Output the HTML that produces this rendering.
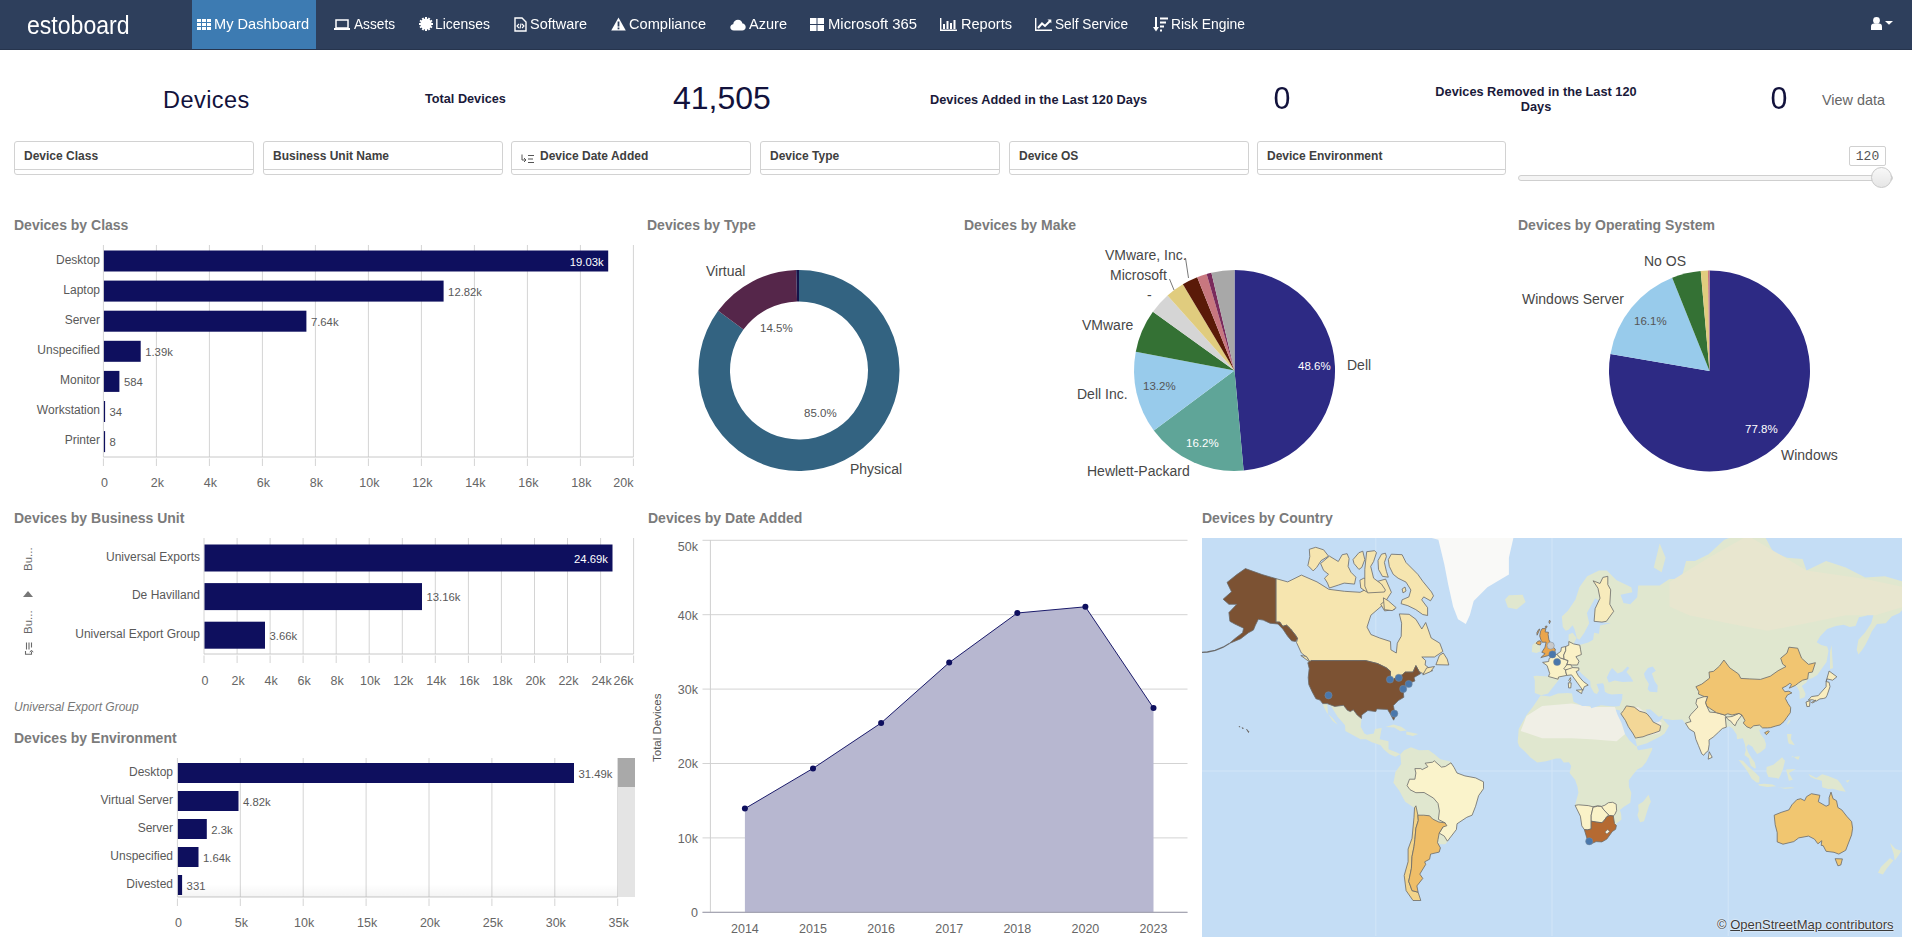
<!DOCTYPE html>
<html><head><meta charset="utf-8">
<style>
*{margin:0;padding:0;box-sizing:border-box}
html,body{width:1912px;height:948px;overflow:hidden;background:#fff;font-family:"Liberation Sans",sans-serif;position:relative}
.a{position:absolute;white-space:nowrap}
#nav{position:absolute;left:0;top:0;width:1912px;height:50px;background:#2e3f5c;border-bottom:1px solid #26344d}
#act{position:absolute;left:192px;top:0;width:124px;height:49px;background:#3d7bb2}
#brand{left:27px;top:11px;font-size:25.5px;line-height:28px;color:#fff;transform:scaleX(0.905);transform-origin:0 0}
.nt{top:15px;font-size:15px;line-height:18px;color:#fff;transform-origin:0 0}
.kp{color:#12123c}
.kl{font-size:13px;font-weight:bold;color:#1a1a3a;line-height:15px}
.fb{position:absolute;top:141px;height:34px;border:1px solid #d2d2d2;border-radius:3px;background:#fff}
.fb .ln{position:absolute;left:0;right:0;top:27px;border-top:1px solid #d2d2d2}
.fb span{position:absolute;top:7px;font-size:12px;line-height:14px;font-weight:bold;color:#404040}
.tt{position:absolute;white-space:nowrap;font-size:14px;font-weight:bold;color:#7b7b7b;line-height:16px}
.lb{position:absolute;white-space:nowrap;font-size:12px;color:#595959;line-height:14px}
.vl{position:absolute;white-space:nowrap;font-size:11.3px;color:#595959;line-height:13px}
.ax{font-size:12.5px;color:#666}
.pl{position:absolute;white-space:nowrap;font-size:14px;color:#474747;line-height:16px}
.pv{position:absolute;white-space:nowrap;font-size:11.5px;color:#555;line-height:14px}
.pw{color:#fff}

</style></head><body>
<div id="nav"><div id="act"></div>
<div class="a" id="brand">estoboard</div>
<div class="a" style="left:197px;top:17px"><svg width="15" height="13" viewBox="0 0 15 13"><g fill="#fff"><rect x="0" y="1" width="4" height="3"/><rect x="5" y="1" width="4" height="3"/><rect x="10" y="1" width="4" height="3"/><rect x="0" y="5" width="4" height="3"/><rect x="5" y="5" width="4" height="3"/><rect x="10" y="5" width="4" height="3"/><rect x="0" y="9" width="4" height="3"/><rect x="5" y="9" width="4" height="3"/><rect x="10" y="9" width="4" height="3"/></g></svg></div>
<div class="a nt" style="left:214px;transform:scaleX(0.974)">My Dashboard</div>
<div class="a" style="left:334px;top:17px"><svg width="16" height="13" viewBox="0 0 16 13"><rect x="2" y="2" width="12" height="8" fill="none" stroke="#fff" stroke-width="1.5"/><rect x="0" y="10" width="16" height="2" fill="#fff"/></svg></div>
<div class="a nt" style="left:354px;transform:scaleX(0.911)">Assets</div>
<div class="a" style="left:419px;top:17px"><svg width="14" height="14" viewBox="0 0 14 14"><g fill="#fff"><circle cx="7" cy="7" r="5.6"/><rect x="6" y="0" width="2" height="3" transform="rotate(0 7 7)"/><rect x="6" y="0" width="2" height="3" transform="rotate(30 7 7)"/><rect x="6" y="0" width="2" height="3" transform="rotate(60 7 7)"/><rect x="6" y="0" width="2" height="3" transform="rotate(90 7 7)"/><rect x="6" y="0" width="2" height="3" transform="rotate(120 7 7)"/><rect x="6" y="0" width="2" height="3" transform="rotate(150 7 7)"/><rect x="6" y="0" width="2" height="3" transform="rotate(180 7 7)"/><rect x="6" y="0" width="2" height="3" transform="rotate(210 7 7)"/><rect x="6" y="0" width="2" height="3" transform="rotate(240 7 7)"/><rect x="6" y="0" width="2" height="3" transform="rotate(270 7 7)"/><rect x="6" y="0" width="2" height="3" transform="rotate(300 7 7)"/><rect x="6" y="0" width="2" height="3" transform="rotate(330 7 7)"/></g></svg></div>
<div class="a nt" style="left:435px;transform:scaleX(0.929)">Licenses</div>
<div class="a" style="left:514px;top:17px"><svg width="13" height="15" viewBox="0 0 13 15"><path d="M1 1 H8 L12 5 V14 H1 Z" fill="none" stroke="#fff" stroke-width="1.4"/><path d="M5 7 L3 9 L5 11 M8 7 L10 9 L8 11 M7 6.5 L6 11.5" fill="none" stroke="#fff" stroke-width="1.1"/></svg></div>
<div class="a nt" style="left:530px;transform:scaleX(0.963)">Software</div>
<div class="a" style="left:611px;top:17px"><svg width="15" height="14" viewBox="0 0 15 14"><path d="M7.5 0.5 L14.8 13.5 H0.2 Z" fill="#fff"/><rect x="6.6" y="4.5" width="1.8" height="5" fill="#2e3f5c"/><rect x="6.6" y="10.5" width="1.8" height="1.8" fill="#2e3f5c"/></svg></div>
<div class="a nt" style="left:629px;transform:scaleX(0.972)">Compliance</div>
<div class="a" style="left:730px;top:17px"><svg width="16" height="12" viewBox="0 0 16 12"><path d="M4 11.5 C1.5 11.5 0.3 10 0.3 8.3 C0.3 6.6 1.6 5.3 3.2 5.2 C3.5 2.6 5.5 0.8 8 0.8 C10.3 0.8 12 2.3 12.5 4.4 C14.4 4.6 15.7 6 15.7 8 C15.7 10 14.2 11.5 12.2 11.5 Z" fill="#fff"/></svg></div>
<div class="a nt" style="left:749px;transform:scaleX(0.970)">Azure</div>
<div class="a" style="left:810px;top:17px"><svg width="14" height="13" viewBox="0 0 14 13"><g fill="#fff"><rect x="0" y="0" width="6.5" height="6"/><rect x="7.5" y="0" width="6.5" height="6"/><rect x="0" y="7" width="6.5" height="6"/><rect x="7.5" y="7" width="6.5" height="6"/></g></svg></div>
<div class="a nt" style="left:827.5px;transform:scaleX(0.988)">Microsoft 365</div>
<div class="a" style="left:940px;top:17px"><svg width="17" height="13" viewBox="0 0 17 13"><path d="M0.7 0 V12.3 H17" fill="none" stroke="#fff" stroke-width="1.4"/><g fill="#fff"><rect x="3" y="6" width="2" height="5"/><rect x="6.5" y="3" width="2" height="8"/><rect x="10" y="5" width="2" height="6"/><rect x="13.5" y="2" width="2" height="9"/></g></svg></div>
<div class="a nt" style="left:960.5px;transform:scaleX(0.971)">Reports</div>
<div class="a" style="left:1034.5px;top:17px"><svg width="17" height="13" viewBox="0 0 17 13"><path d="M0.7 0 V12.3 H17" fill="none" stroke="#fff" stroke-width="1.4"/><path d="M3 10 L7 5.5 L10 8 L15.5 2.5" fill="none" stroke="#fff" stroke-width="2"/><path d="M12.5 1.5 H16.3 V5.3 Z" fill="#fff"/></svg></div>
<div class="a nt" style="left:1055px;transform:scaleX(0.912)">Self Service</div>
<div class="a" style="left:1152.5px;top:17px"><svg width="15" height="15" viewBox="0 0 15 15"><path d="M3 0 V12" stroke="#fff" stroke-width="2"/><path d="M0 10 L3 14.5 L6 10 Z" fill="#fff"/><g fill="#fff"><rect x="7" y="0.5" width="8" height="2"/><rect x="7" y="4.5" width="6" height="2"/><rect x="7" y="8.5" width="4" height="2"/><rect x="7" y="12.5" width="2" height="2"/></g></svg></div>
<div class="a nt" style="left:1170.5px;transform:scaleX(0.924)">Risk Engine</div>
<div class="a" style="left:1871px;top:16px"><svg width="23" height="16" viewBox="0 0 23 16"><circle cx="5.5" cy="4.4" r="3.4" fill="#fff"/><path d="M0 13.9 V10.6 C0 8.9 1.2 7.6 3 7.6 H8 C9.8 7.6 11 8.9 11 10.6 V13.9 Z" fill="#fff"/><path d="M14 5 H22 L18 8.8 Z" fill="#fff"/></svg></div>
</div>
<div class="a kp" style="left:163px;top:87px;font-size:23.5px;line-height:27px;letter-spacing:0.45px">Devices</div>
<div class="a kl" style="left:425px;top:92px;font-size:12.7px">Total Devices</div>
<div class="a kp" style="left:673px;top:80px;font-size:32px;line-height:36px">41,505</div>
<div class="a kl" style="left:930px;top:92px;font-size:12.75px">Devices Added in the Last 120 Days</div>
<div class="a kp" style="left:1273px;top:80px;font-size:32px;line-height:36px;transform:scaleX(0.95)">0</div>
<div class="a kl" style="left:1386px;top:84px;width:300px;text-align:center;font-size:12.75px;line-height:15px;white-space:normal">Devices Removed in the Last 120<br>Days</div>
<div class="a kp" style="left:1770px;top:80px;font-size:32px;line-height:36px;transform:scaleX(0.95)">0</div>
<div class="a" style="left:1822px;top:92px;font-size:14.4px;color:#666">View data</div>
<div class="fb" style="left:14px;width:240px"><span style="left:9px">Device Class</span><div class="ln"></div></div>
<div class="fb" style="left:263px;width:240px"><span style="left:9px">Business Unit Name</span><div class="ln"></div></div>
<div class="fb" style="left:511px;width:240px"><svg class="fi" width="14" height="10" viewBox="0 0 14 10" style="position:absolute;left:9px;top:12px"><path d="M1 0.5 V6 H4.5 M3 4 L5 6 L3 8" fill="none" stroke="#555" stroke-width="1"/><path d="M7 1.5 H13 M7 5 H12 M7 8.5 H13" stroke="#555" stroke-width="1"/></svg><span style="left:28px">Device Date Added</span><div class="ln"></div></div>
<div class="fb" style="left:760px;width:240px"><span style="left:9px">Device Type</span><div class="ln"></div></div>
<div class="fb" style="left:1009px;width:240px"><span style="left:9px">Device OS</span><div class="ln"></div></div>
<div class="fb" style="left:1257px;width:249px"><span style="left:9px">Device Environment</span><div class="ln"></div></div>
<div class="a" style="left:1849px;top:146px;width:37px;height:20px;border:1px solid #d0d0d0;border-radius:2px;font-family:'Liberation Mono',monospace;font-size:13px;color:#555;text-align:center;line-height:20px">120</div>
<div class="a" style="left:1518px;top:175px;width:375px;height:6px;border:1px solid #cfcfcf;border-radius:3px;background:#f4f4f4"></div>
<div class="a" style="left:1871px;top:167px;width:21px;height:21px;border:1px solid #c8c8c8;border-radius:50%;background:linear-gradient(#f8f8f8,#e6e6e6)"></div>
<div class="tt" style="left:14px;top:217px">Devices by Class</div>
<svg class="a" style="left:0;top:0" width="1912" height="948" viewBox="0 0 1912 948"><line x1="103.4" y1="245" x2="103.4" y2="457" stroke="#d4d4d4" stroke-width="1"/><line x1="103.4" y1="458.5" x2="103.4" y2="466" stroke="#d4d4d4" stroke-width="1"/><line x1="156.4" y1="245" x2="156.4" y2="457" stroke="#d4d4d4" stroke-width="1"/><line x1="156.4" y1="458.5" x2="156.4" y2="466" stroke="#d4d4d4" stroke-width="1"/><line x1="209.4" y1="245" x2="209.4" y2="457" stroke="#d4d4d4" stroke-width="1"/><line x1="209.4" y1="458.5" x2="209.4" y2="466" stroke="#d4d4d4" stroke-width="1"/><line x1="262.4" y1="245" x2="262.4" y2="457" stroke="#d4d4d4" stroke-width="1"/><line x1="262.4" y1="458.5" x2="262.4" y2="466" stroke="#d4d4d4" stroke-width="1"/><line x1="315.4" y1="245" x2="315.4" y2="457" stroke="#d4d4d4" stroke-width="1"/><line x1="315.4" y1="458.5" x2="315.4" y2="466" stroke="#d4d4d4" stroke-width="1"/><line x1="368.4" y1="245" x2="368.4" y2="457" stroke="#d4d4d4" stroke-width="1"/><line x1="368.4" y1="458.5" x2="368.4" y2="466" stroke="#d4d4d4" stroke-width="1"/><line x1="421.4" y1="245" x2="421.4" y2="457" stroke="#d4d4d4" stroke-width="1"/><line x1="421.4" y1="458.5" x2="421.4" y2="466" stroke="#d4d4d4" stroke-width="1"/><line x1="474.4" y1="245" x2="474.4" y2="457" stroke="#d4d4d4" stroke-width="1"/><line x1="474.4" y1="458.5" x2="474.4" y2="466" stroke="#d4d4d4" stroke-width="1"/><line x1="527.4" y1="245" x2="527.4" y2="457" stroke="#d4d4d4" stroke-width="1"/><line x1="527.4" y1="458.5" x2="527.4" y2="466" stroke="#d4d4d4" stroke-width="1"/><line x1="580.4" y1="245" x2="580.4" y2="457" stroke="#d4d4d4" stroke-width="1"/><line x1="580.4" y1="458.5" x2="580.4" y2="466" stroke="#d4d4d4" stroke-width="1"/><line x1="633.4" y1="245" x2="633.4" y2="457" stroke="#d4d4d4" stroke-width="1"/><line x1="633.4" y1="458.5" x2="633.4" y2="466" stroke="#d4d4d4" stroke-width="1"/><line x1="103.4" y1="457" x2="633.4" y2="457" stroke="#c8c8c8" stroke-width="1"/><rect x="103.9" y="250.5" width="504.3" height="21" fill="#0e0f5e"/><rect x="103.9" y="280.6" width="339.7" height="21" fill="#0e0f5e"/><rect x="103.9" y="310.7" width="202.5" height="21" fill="#0e0f5e"/><rect x="103.9" y="340.8" width="36.8" height="21" fill="#0e0f5e"/><rect x="103.9" y="370.9" width="15.5" height="21" fill="#0e0f5e"/><rect x="103.9" y="401.0" width="1.2" height="21" fill="#0e0f5e"/><rect x="103.9" y="431.1" width="1.2" height="21" fill="#0e0f5e"/></svg>
<div class="lb" style="left:-100px;width:200px;text-align:right;top:252.8px">Desktop</div>
<div class="vl" style="left:403.7px;width:200px;text-align:right;top:255.7px;color:#fff">19.03k</div>
<div class="lb" style="left:-100px;width:200px;text-align:right;top:282.9px">Laptop</div>
<div class="vl" style="left:448.1px;top:285.8px">12.82k</div>
<div class="lb" style="left:-100px;width:200px;text-align:right;top:313.0px">Server</div>
<div class="vl" style="left:310.9px;top:315.9px">7.64k</div>
<div class="lb" style="left:-100px;width:200px;text-align:right;top:343.1px">Unspecified</div>
<div class="vl" style="left:145.2px;top:346.0px">1.39k</div>
<div class="lb" style="left:-100px;width:200px;text-align:right;top:373.2px">Monitor</div>
<div class="vl" style="left:123.9px;top:376.1px">584</div>
<div class="lb" style="left:-100px;width:200px;text-align:right;top:403.3px">Workstation</div>
<div class="vl" style="left:109.4px;top:406.2px">34</div>
<div class="lb" style="left:-100px;width:200px;text-align:right;top:433.4px">Printer</div>
<div class="vl" style="left:109.4px;top:436.3px">8</div>
<div class="vl ax" style="left:54.4px;width:100px;text-align:center;top:476.5px">0</div>
<div class="vl ax" style="left:107.4px;width:100px;text-align:center;top:476.5px">2k</div>
<div class="vl ax" style="left:160.4px;width:100px;text-align:center;top:476.5px">4k</div>
<div class="vl ax" style="left:213.4px;width:100px;text-align:center;top:476.5px">6k</div>
<div class="vl ax" style="left:266.4px;width:100px;text-align:center;top:476.5px">8k</div>
<div class="vl ax" style="left:319.4px;width:100px;text-align:center;top:476.5px">10k</div>
<div class="vl ax" style="left:372.4px;width:100px;text-align:center;top:476.5px">12k</div>
<div class="vl ax" style="left:425.4px;width:100px;text-align:center;top:476.5px">14k</div>
<div class="vl ax" style="left:478.4px;width:100px;text-align:center;top:476.5px">16k</div>
<div class="vl ax" style="left:531.4px;width:100px;text-align:center;top:476.5px">18k</div>
<div class="vl ax" style="left:533.4px;width:100px;text-align:right;top:476.5px">20k</div>
<div class="tt" style="left:14px;top:510px">Devices by Business Unit</div>
<svg class="a" style="left:0;top:0" width="1912" height="948" viewBox="0 0 1912 948"><line x1="204.0" y1="538" x2="204.0" y2="654" stroke="#d4d4d4" stroke-width="1"/><line x1="204.0" y1="655.5" x2="204.0" y2="663" stroke="#d4d4d4" stroke-width="1"/><line x1="237.1" y1="538" x2="237.1" y2="654" stroke="#d4d4d4" stroke-width="1"/><line x1="237.1" y1="655.5" x2="237.1" y2="663" stroke="#d4d4d4" stroke-width="1"/><line x1="270.1" y1="538" x2="270.1" y2="654" stroke="#d4d4d4" stroke-width="1"/><line x1="270.1" y1="655.5" x2="270.1" y2="663" stroke="#d4d4d4" stroke-width="1"/><line x1="303.1" y1="538" x2="303.1" y2="654" stroke="#d4d4d4" stroke-width="1"/><line x1="303.1" y1="655.5" x2="303.1" y2="663" stroke="#d4d4d4" stroke-width="1"/><line x1="336.2" y1="538" x2="336.2" y2="654" stroke="#d4d4d4" stroke-width="1"/><line x1="336.2" y1="655.5" x2="336.2" y2="663" stroke="#d4d4d4" stroke-width="1"/><line x1="369.2" y1="538" x2="369.2" y2="654" stroke="#d4d4d4" stroke-width="1"/><line x1="369.2" y1="655.5" x2="369.2" y2="663" stroke="#d4d4d4" stroke-width="1"/><line x1="402.3" y1="538" x2="402.3" y2="654" stroke="#d4d4d4" stroke-width="1"/><line x1="402.3" y1="655.5" x2="402.3" y2="663" stroke="#d4d4d4" stroke-width="1"/><line x1="435.3" y1="538" x2="435.3" y2="654" stroke="#d4d4d4" stroke-width="1"/><line x1="435.3" y1="655.5" x2="435.3" y2="663" stroke="#d4d4d4" stroke-width="1"/><line x1="468.4" y1="538" x2="468.4" y2="654" stroke="#d4d4d4" stroke-width="1"/><line x1="468.4" y1="655.5" x2="468.4" y2="663" stroke="#d4d4d4" stroke-width="1"/><line x1="501.4" y1="538" x2="501.4" y2="654" stroke="#d4d4d4" stroke-width="1"/><line x1="501.4" y1="655.5" x2="501.4" y2="663" stroke="#d4d4d4" stroke-width="1"/><line x1="534.5" y1="538" x2="534.5" y2="654" stroke="#d4d4d4" stroke-width="1"/><line x1="534.5" y1="655.5" x2="534.5" y2="663" stroke="#d4d4d4" stroke-width="1"/><line x1="567.5" y1="538" x2="567.5" y2="654" stroke="#d4d4d4" stroke-width="1"/><line x1="567.5" y1="655.5" x2="567.5" y2="663" stroke="#d4d4d4" stroke-width="1"/><line x1="600.6" y1="538" x2="600.6" y2="654" stroke="#d4d4d4" stroke-width="1"/><line x1="600.6" y1="655.5" x2="600.6" y2="663" stroke="#d4d4d4" stroke-width="1"/><line x1="633.6" y1="538" x2="633.6" y2="654" stroke="#d4d4d4" stroke-width="1"/><line x1="633.6" y1="655.5" x2="633.6" y2="663" stroke="#d4d4d4" stroke-width="1"/><line x1="204" y1="654" x2="633.6" y2="654" stroke="#c8c8c8" stroke-width="1"/><rect x="204.5" y="544.5" width="408.0" height="27" fill="#0e0f5e"/><rect x="204.5" y="583.1" width="217.5" height="27" fill="#0e0f5e"/><rect x="204.5" y="621.7" width="60.5" height="27" fill="#0e0f5e"/></svg>
<div class="lb" style="left:0px;width:200px;text-align:right;top:549.8px">Universal Exports</div>
<div class="vl" style="left:408.0px;width:200px;text-align:right;top:552.7px;color:#fff">24.69k</div>
<div class="lb" style="left:0px;width:200px;text-align:right;top:588.4px">De Havilland</div>
<div class="vl" style="left:426.5px;top:591.3px">13.16k</div>
<div class="lb" style="left:0px;width:200px;text-align:right;top:627.0px">Universal Export Group</div>
<div class="vl" style="left:269.5px;top:629.9px">3.66k</div>
<div class="vl ax" style="left:155.0px;width:100px;text-align:center;top:674.5px">0</div>
<div class="vl ax" style="left:188.1px;width:100px;text-align:center;top:674.5px">2k</div>
<div class="vl ax" style="left:221.1px;width:100px;text-align:center;top:674.5px">4k</div>
<div class="vl ax" style="left:254.1px;width:100px;text-align:center;top:674.5px">6k</div>
<div class="vl ax" style="left:287.2px;width:100px;text-align:center;top:674.5px">8k</div>
<div class="vl ax" style="left:320.2px;width:100px;text-align:center;top:674.5px">10k</div>
<div class="vl ax" style="left:353.3px;width:100px;text-align:center;top:674.5px">12k</div>
<div class="vl ax" style="left:386.3px;width:100px;text-align:center;top:674.5px">14k</div>
<div class="vl ax" style="left:419.4px;width:100px;text-align:center;top:674.5px">16k</div>
<div class="vl ax" style="left:452.4px;width:100px;text-align:center;top:674.5px">18k</div>
<div class="vl ax" style="left:485.5px;width:100px;text-align:center;top:674.5px">20k</div>
<div class="vl ax" style="left:518.5px;width:100px;text-align:center;top:674.5px">22k</div>
<div class="vl ax" style="left:551.6px;width:100px;text-align:center;top:674.5px">24k</div>
<div class="vl ax" style="left:533.6px;width:100px;text-align:right;top:674.5px">26k</div>
<div class="a" style="left:14px;top:700px;font-size:12px;font-style:italic;color:#777">Universal Export Group</div>
<div class="a" style="left:21px;top:545px;width:14px;height:26px"><div style="position:absolute;left:0;top:26px;transform:rotate(-90deg);transform-origin:0 0;font-size:11.5px;color:#666;line-height:14px">Bu...</div></div>
<svg class="a" style="left:22px;top:590px" width="12" height="8"><path d="M1 7 L6 1 L11 7 Z" fill="#777"/></svg>
<div class="a" style="left:21px;top:608px;width:14px;height:26px"><div style="position:absolute;left:0;top:26px;transform:rotate(-90deg);transform-origin:0 0;font-size:11.5px;color:#666;line-height:14px">Bu...</div></div>
<svg class="a" style="left:23px;top:641px" width="12" height="15" viewBox="0 0 12 15"><path d="M3.5 1.5 V8.5 M6 1.5 V8.5 M8.5 1.5 V6.5" stroke="#6a6a6a" stroke-width="1.1"/><path d="M2.5 10 V13.2 H8.5 V10.5" fill="none" stroke="#6a6a6a" stroke-width="1.1"/><path d="M6.8 11.2 L8.5 9.2 L10.2 11.2" fill="none" stroke="#6a6a6a" stroke-width="1"/></svg>
<div class="tt" style="left:14px;top:730px">Devices by Environment</div>
<svg class="a" style="left:0;top:0" width="1912" height="948" viewBox="0 0 1912 948"><line x1="177.4" y1="758" x2="177.4" y2="897" stroke="#d4d4d4" stroke-width="1"/><line x1="177.4" y1="898.5" x2="177.4" y2="906" stroke="#d4d4d4" stroke-width="1"/><line x1="240.3" y1="758" x2="240.3" y2="897" stroke="#d4d4d4" stroke-width="1"/><line x1="240.3" y1="898.5" x2="240.3" y2="906" stroke="#d4d4d4" stroke-width="1"/><line x1="303.2" y1="758" x2="303.2" y2="897" stroke="#d4d4d4" stroke-width="1"/><line x1="303.2" y1="898.5" x2="303.2" y2="906" stroke="#d4d4d4" stroke-width="1"/><line x1="366.1" y1="758" x2="366.1" y2="897" stroke="#d4d4d4" stroke-width="1"/><line x1="366.1" y1="898.5" x2="366.1" y2="906" stroke="#d4d4d4" stroke-width="1"/><line x1="429.0" y1="758" x2="429.0" y2="897" stroke="#d4d4d4" stroke-width="1"/><line x1="429.0" y1="898.5" x2="429.0" y2="906" stroke="#d4d4d4" stroke-width="1"/><line x1="491.9" y1="758" x2="491.9" y2="897" stroke="#d4d4d4" stroke-width="1"/><line x1="491.9" y1="898.5" x2="491.9" y2="906" stroke="#d4d4d4" stroke-width="1"/><line x1="554.8" y1="758" x2="554.8" y2="897" stroke="#d4d4d4" stroke-width="1"/><line x1="554.8" y1="898.5" x2="554.8" y2="906" stroke="#d4d4d4" stroke-width="1"/><line x1="617.7" y1="758" x2="617.7" y2="897" stroke="#d4d4d4" stroke-width="1"/><line x1="617.7" y1="898.5" x2="617.7" y2="906" stroke="#d4d4d4" stroke-width="1"/><line x1="177.4" y1="897" x2="617.7" y2="897" stroke="#c8c8c8" stroke-width="1"/><rect x="177.9" y="763" width="396.1" height="20" fill="#0e0f5e"/><rect x="177.9" y="791" width="60.6" height="20" fill="#0e0f5e"/><rect x="177.9" y="819" width="28.9" height="20" fill="#0e0f5e"/><rect x="177.9" y="847" width="20.6" height="20" fill="#0e0f5e"/><rect x="177.9" y="875" width="4.2" height="20" fill="#0e0f5e"/></svg>
<div class="lb" style="left:-27px;width:200px;text-align:right;top:764.8px">Desktop</div>
<div class="vl" style="left:578.5px;top:767.7px">31.49k</div>
<div class="lb" style="left:-27px;width:200px;text-align:right;top:792.8px">Virtual Server</div>
<div class="vl" style="left:243.0px;top:795.7px">4.82k</div>
<div class="lb" style="left:-27px;width:200px;text-align:right;top:820.8px">Server</div>
<div class="vl" style="left:211.3px;top:823.7px">2.3k</div>
<div class="lb" style="left:-27px;width:200px;text-align:right;top:848.8px">Unspecified</div>
<div class="vl" style="left:203.0px;top:851.7px">1.64k</div>
<div class="lb" style="left:-27px;width:200px;text-align:right;top:876.8px">Divested</div>
<div class="vl" style="left:186.6px;top:879.7px">331</div>
<div class="vl ax" style="left:128.4px;width:100px;text-align:center;top:916.5px">0</div>
<div class="vl ax" style="left:191.3px;width:100px;text-align:center;top:916.5px">5k</div>
<div class="vl ax" style="left:254.2px;width:100px;text-align:center;top:916.5px">10k</div>
<div class="vl ax" style="left:317.1px;width:100px;text-align:center;top:916.5px">15k</div>
<div class="vl ax" style="left:380.0px;width:100px;text-align:center;top:916.5px">20k</div>
<div class="vl ax" style="left:442.9px;width:100px;text-align:center;top:916.5px">25k</div>
<div class="vl ax" style="left:505.8px;width:100px;text-align:center;top:916.5px">30k</div>
<div class="vl ax" style="left:568.7px;width:100px;text-align:center;top:916.5px">35k</div>
<div class="a" style="left:178px;top:884px;width:440px;height:13px;background:linear-gradient(rgba(0,0,0,0),rgba(0,0,0,0.045))"></div>
<div class="a" style="left:618px;top:758px;width:17px;height:139px;background:#e4e4e4"></div>
<div class="a" style="left:618px;top:758px;width:17px;height:29px;background:#a9a9a9"></div>
<div class="tt" style="left:647px;top:217px">Devices by Type</div>
<div class="tt" style="left:964px;top:217px">Devices by Make</div>
<div class="tt" style="left:1518px;top:217px">Devices by Operating System</div>
<svg class="a" style="left:0;top:0" width="1912" height="948"><path d="M799.00 270.00 A100.5 100.5 0 1 1 718.11 310.86 L743.46 329.55 A69 69 0 1 0 799.00 301.50 Z" fill="#336381"/><path d="M718.11 310.86 A100.5 100.5 0 0 1 796.19 270.04 L797.07 301.53 A69 69 0 0 0 743.46 329.55 Z" fill="#55264a"/><path d="M796.19 270.04 A100.5 100.5 0 0 1 799.00 270.00 L799.00 301.50 A69 69 0 0 0 797.07 301.53 Z" fill="#14144a"/><path d="M1234.50 370.50 L1234.50 270.00 A100.5 100.5 0 0 1 1243.61 470.59 Z" fill="#2d2a84"/><path d="M1234.50 370.50 L1243.61 470.59 A100.5 100.5 0 0 1 1153.82 430.42 Z" fill="#5fa598"/><path d="M1234.50 370.50 L1153.82 430.42 A100.5 100.5 0 0 1 1135.78 351.67 Z" fill="#98cbeb"/><path d="M1234.50 370.50 L1135.78 351.67 A100.5 100.5 0 0 1 1152.89 311.85 Z" fill="#347134"/><path d="M1234.50 370.50 L1152.89 311.85 A100.5 100.5 0 0 1 1167.51 295.58 Z" fill="#d5d5d5"/><path d="M1234.50 370.50 L1167.51 295.58 A100.5 100.5 0 0 1 1182.89 284.26 Z" fill="#e0cc7e"/><path d="M1234.50 370.50 L1182.89 284.26 A100.5 100.5 0 0 1 1197.18 277.19 Z" fill="#5a1a08"/><path d="M1234.50 370.50 L1197.18 277.19 A100.5 100.5 0 0 1 1206.63 273.94 Z" fill="#c8777f"/><path d="M1234.50 370.50 L1206.63 273.94 A100.5 100.5 0 0 1 1211.38 272.70 Z" fill="#7a2b5c"/><path d="M1234.50 370.50 L1211.38 272.70 A100.5 100.5 0 0 1 1234.50 270.00 Z" fill="#a8a8a8"/><path d="M1185.5 258 L1188.5 278" stroke="#555" stroke-width="0.8" fill="none"/><path d="M1169.5 279 L1174 290" stroke="#555" stroke-width="0.8" fill="none"/><path d="M1709.50 371.00 L1709.50 270.50 A100.5 100.5 0 1 1 1610.47 353.89 Z" fill="#2d2a84"/><path d="M1709.50 371.00 L1610.47 353.89 A100.5 100.5 0 0 1 1672.18 277.69 Z" fill="#98cbeb"/><path d="M1709.50 371.00 L1672.18 277.69 A100.5 100.5 0 0 1 1700.74 270.88 Z" fill="#347134"/><path d="M1709.50 371.00 L1700.74 270.88 A100.5 100.5 0 0 1 1707.92 270.51 Z" fill="#e0cc7e"/><path d="M1709.50 371.00 L1707.92 270.51 A100.5 100.5 0 0 1 1709.50 270.50 Z" fill="#c8777f"/></svg>
<div class="pl" style="left:706px;top:263px">Virtual</div>
<div class="pv" style="left:760px;top:321px">14.5%</div>
<div class="pv" style="left:804px;top:406px">85.0%</div>
<div class="pl" style="left:850px;top:461px">Physical</div>
<div class="pl" style="left:1347px;top:357px">Dell</div>
<div class="pv pw" style="left:1298px;top:359px">48.6%</div>
<div class="pv pw" style="left:1186px;top:436px">16.2%</div>
<div class="pv" style="left:1143px;top:379px">13.2%</div>
<div class="pl" style="left:1087px;top:463px">Hewlett-Packard</div>
<div class="pl" style="left:1077px;top:386px">Dell Inc.</div>
<div class="pl" style="left:1082px;top:317px">VMware</div>
<div class="pl" style="left:1147px;top:287px">-</div>
<div class="pl" style="left:1110px;top:267px">Microsoft</div>
<div class="pl" style="left:1105px;top:247px">VMware, Inc.</div>
<div class="pl" style="left:1644px;top:253px">No OS</div>
<div class="pl" style="left:1522px;top:291px">Windows Server</div>
<div class="pv" style="left:1634px;top:314px">16.1%</div>
<div class="pv pw" style="left:1745px;top:422px">77.8%</div>
<div class="pl" style="left:1781px;top:447px">Windows</div>
<div class="tt" style="left:648px;top:510px">Devices by Date Added</div>
<svg class="a" style="left:0;top:0" width="1912" height="948"><line x1="702.5" y1="912.3" x2="1187.5" y2="912.3" stroke="#d3d3d3" stroke-width="1"/><line x1="702.5" y1="837.9" x2="1187.5" y2="837.9" stroke="#d3d3d3" stroke-width="1"/><line x1="702.5" y1="763.5" x2="1187.5" y2="763.5" stroke="#d3d3d3" stroke-width="1"/><line x1="702.5" y1="689.1" x2="1187.5" y2="689.1" stroke="#d3d3d3" stroke-width="1"/><line x1="702.5" y1="614.7" x2="1187.5" y2="614.7" stroke="#d3d3d3" stroke-width="1"/><line x1="702.5" y1="540.3" x2="1187.5" y2="540.3" stroke="#d3d3d3" stroke-width="1"/><line x1="710.4" y1="540" x2="710.4" y2="912.3" stroke="#cfcfcf" stroke-width="1"/><polygon points="744.9,912.3 744.9,808.6 813.0,768.4 881.1,723.0 949.2,662.6 1017.3,613.0 1085.4,606.8 1153.5,708.0 1153.5,912.3" fill="#b7b7d0"/><line x1="702.5" y1="912.3" x2="1187.5" y2="912.3" stroke="#9a9aaa" stroke-width="1"/><polyline points="744.9,808.6 813.0,768.4 881.1,723.0 949.2,662.6 1017.3,613.0 1085.4,606.8 1153.5,708.0" fill="none" stroke="#1b1b6b" stroke-width="1"/><circle cx="744.9" cy="808.6" r="3" fill="#0e0f5e"/><circle cx="813.0" cy="768.4" r="3" fill="#0e0f5e"/><circle cx="881.1" cy="723.0" r="3" fill="#0e0f5e"/><circle cx="949.2" cy="662.6" r="3" fill="#0e0f5e"/><circle cx="1017.3" cy="613.0" r="3" fill="#0e0f5e"/><circle cx="1085.4" cy="606.8" r="3" fill="#0e0f5e"/><circle cx="1153.5" cy="708.0" r="3" fill="#0e0f5e"/></svg>
<div class="vl ax" style="left:598px;width:100px;text-align:right;top:907.1px">0</div>
<div class="vl ax" style="left:598px;width:100px;text-align:right;top:832.7px">10k</div>
<div class="vl ax" style="left:598px;width:100px;text-align:right;top:758.3px">20k</div>
<div class="vl ax" style="left:598px;width:100px;text-align:right;top:683.9px">30k</div>
<div class="vl ax" style="left:598px;width:100px;text-align:right;top:609.5px">40k</div>
<div class="vl ax" style="left:598px;width:100px;text-align:right;top:541.3px">50k</div>
<div class="vl ax" style="left:694.9px;width:100px;text-align:center;top:922.8px">2014</div>
<div class="vl ax" style="left:763.0px;width:100px;text-align:center;top:922.8px">2015</div>
<div class="vl ax" style="left:831.1px;width:100px;text-align:center;top:922.8px">2016</div>
<div class="vl ax" style="left:899.2px;width:100px;text-align:center;top:922.8px">2017</div>
<div class="vl ax" style="left:967.3px;width:100px;text-align:center;top:922.8px">2018</div>
<div class="vl ax" style="left:1035.4px;width:100px;text-align:center;top:922.8px">2020</div>
<div class="vl ax" style="left:1103.5px;width:100px;text-align:center;top:922.8px">2023</div>
<div class="a" style="left:650px;top:762px;width:14px;height:70px"><div style="position:absolute;left:0;top:0;transform:rotate(-90deg);transform-origin:0 0;font-size:11.5px;color:#555;line-height:14px;position:absolute;top:0">Total Devices</div></div>
<div class="tt" style="left:1202px;top:510px">Devices by Country</div>
<svg class="a" style="left:1202px;top:538px" width="700" height="399" viewBox="1202 538 700 399"><rect x="1202" y="538" width="700" height="399" fill="#c4ddf5"/><line x1="1375.8" y1="538" x2="1375.8" y2="936" stroke="#d2e5f7" stroke-width="1"/><line x1="1552.0" y1="538" x2="1552.0" y2="936" stroke="#d2e5f7" stroke-width="1"/><line x1="1728.2" y1="538" x2="1728.2" y2="936" stroke="#d2e5f7" stroke-width="1"/><line x1="1202" y1="771.0" x2="1902" y2="771.0" stroke="#d2e5f7" stroke-width="1"/><path d="M1540.4 695.8 L1532.8 707.1 L1526.5 715.0 L1518.7 728.9 L1517.7 741.9 L1519.1 746.3 L1525.6 752.3 L1530.5 757.5 L1537.3 762.4 L1546.1 761.2 L1555.9 758.6 L1560.8 758.6 L1563.7 762.6 L1569.0 762.2 L1571.2 766.1 L1569.6 773.0 L1575.1 779.8 L1577.5 786.7 L1578.4 792.7 L1575.1 804.8 L1580.4 816.2 L1581.8 825.9 L1584.3 829.5 L1588.0 841.9 L1591.2 843.8 L1596.1 841.6 L1601.9 841.9 L1606.8 839.1 L1612.3 831.5 L1615.6 829.3 L1616.2 823.8 L1621.5 819.4 L1621.1 814.1 L1619.9 809.9 L1623.9 806.8 L1630.3 802.7 L1631.3 792.7 L1628.9 786.7 L1628.8 780.2 L1633.3 774.3 L1637.2 769.6 L1642.1 767.1 L1646.0 762.2 L1651.9 750.3 L1652.4 747.7 L1646.0 748.9 L1638.2 750.3 L1636.8 747.7 L1637.2 745.9 L1640.1 745.3 L1647.0 743.3 L1653.8 739.7 L1660.7 736.2 L1664.6 733.5 L1669.1 725.8 L1666.5 723.2 L1662.2 718.2 L1663.6 718.7 L1672.4 720.0 L1682.2 719.5 L1685.1 723.2 L1689.1 728.9 L1694.3 732.1 L1695.9 739.3 L1698.5 745.7 L1701.8 753.9 L1703.7 755.3 L1705.1 753.3 L1708.2 750.7 L1709.2 744.3 L1709.0 739.9 L1713.1 737.2 L1718.6 732.1 L1722.3 728.5 L1726.3 727.2 L1729.2 726.2 L1732.5 728.5 L1736.6 734.5 L1737.0 739.3 L1742.9 738.2 L1744.9 744.3 L1745.8 750.3 L1744.5 754.9 L1748.8 758.2 L1750.7 765.5 L1754.7 768.5 L1756.0 768.1 L1754.7 762.2 L1752.1 758.8 L1748.4 752.7 L1746.2 746.9 L1748.4 744.3 L1752.7 746.9 L1753.7 749.3 L1757.2 754.1 L1760.5 752.3 L1765.4 748.3 L1766.0 744.3 L1764.4 739.3 L1760.5 734.1 L1759.2 730.0 L1762.5 727.9 L1767.4 727.9 L1770.3 727.7 L1775.2 726.2 L1780.1 724.9 L1784.0 721.5 L1787.0 717.2 L1790.3 712.7 L1790.7 707.6 L1787.9 703.4 L1785.4 698.5 L1787.5 694.9 L1791.9 692.9 L1788.9 691.2 L1784.8 691.7 L1783.0 689.2 L1782.3 687.9 L1786.0 686.2 L1789.9 683.3 L1791.5 684.4 L1789.3 688.2 L1795.4 685.4 L1797.3 687.2 L1799.5 691.7 L1799.7 698.9 L1804.6 697.3 L1805.6 694.1 L1803.6 689.2 L1801.6 685.9 L1806.1 682.8 L1807.9 679.4 L1812.4 678.1 L1817.3 675.1 L1822.2 667.9 L1826.5 662.1 L1828.5 650.7 L1827.1 646.5 L1821.2 644.9 L1816.7 642.2 L1820.2 636.3 L1827.1 629.0 L1835.9 626.0 L1843.7 624.8 L1849.6 627.1 L1855.5 626.0 L1859.0 617.2 L1865.3 616.0 L1871.2 613.5 L1874.1 612.6 L1871.2 623.2 L1864.9 632.7 L1858.4 639.8 L1856.7 649.8 L1858.4 654.5 L1862.3 649.8 L1865.3 644.9 L1869.2 637.3 L1871.7 631.6 L1877.0 624.0 L1885.8 623.2 L1891.7 616.4 L1899.5 613.1 L1903.5 608.7 L1904.4 602.0 L1904.4 581.9 L1884.9 576.3 L1865.3 577.4 L1845.7 567.4 L1826.1 561.0 L1806.5 570.4 L1802.6 559.1 L1787.0 557.7 L1773.3 552.2 L1757.6 522.9 L1747.8 531.6 L1724.3 539.7 L1708.6 554.3 L1694.9 561.0 L1686.1 561.0 L1681.2 579.1 L1669.5 579.1 L1659.7 585.6 L1638.2 585.6 L1637.2 597.3 L1630.3 604.3 L1623.5 602.9 L1620.5 594.8 L1632.3 592.3 L1631.3 587.2 L1616.6 580.2 L1606.8 570.4 L1599.0 570.4 L1587.2 576.3 L1579.4 587.2 L1575.5 599.6 L1567.7 610.9 L1561.8 616.4 L1562.8 627.1 L1565.7 630.8 L1568.6 629.7 L1572.6 625.2 L1574.5 629.0 L1577.1 638.7 L1572.6 632.7 L1568.6 634.5 L1568.6 641.5 L1568.8 646.5 L1565.7 646.5 L1560.8 651.4 L1557.9 653.9 L1555.1 655.1 L1549.1 658.5 L1548.7 661.5 L1542.6 662.4 L1547.1 665.6 L1549.7 673.5 L1548.5 676.5 L1536.3 675.7 L1533.4 676.2 L1534.8 680.2 L1534.8 692.9 L1540.3 694.9 L1541.0 695.3 Z" fill="#e0e7cf"/><path d="M1400.3 754.3 L1404.2 750.3 L1411.0 747.3 L1418.9 750.3 L1428.6 750.1 L1434.5 754.3 L1440.4 759.2 L1450.2 761.6 L1454.1 767.5 L1457.0 773.0 L1464.9 775.9 L1475.6 777.9 L1483.5 781.8 L1483.5 788.7 L1478.6 795.7 L1475.6 806.2 L1472.1 815.2 L1466.8 817.3 L1457.0 823.8 L1456.4 829.5 L1448.2 840.7 L1445.3 844.2 L1439.4 844.2 L1437.5 842.6 L1440.4 847.9 L1439.2 852.1 L1430.6 854.1 L1429.6 859.2 L1424.7 861.8 L1425.7 864.4 L1419.8 874.1 L1422.8 878.4 L1416.9 885.9 L1418.1 892.2 L1415.9 891.6 L1420.8 900.5 L1413.0 900.5 L1406.1 890.6 L1404.2 875.5 L1408.1 861.8 L1408.1 849.1 L1412.0 838.4 L1414.0 817.3 L1414.5 807.9 L1405.2 801.7 L1399.3 790.7 L1393.4 782.8 L1394.4 777.9 L1395.4 772.0 L1401.2 764.1 Z" fill="#e0e7cf"/><path d="M1327.2 703.6 L1334.7 706.4 L1343.5 705.3 L1347.4 710.3 L1350.3 711.6 L1353.3 709.8 L1357.2 715.0 L1361.5 718.5 L1360.7 726.8 L1364.4 733.5 L1367.0 734.7 L1373.8 733.5 L1375.0 728.9 L1381.7 727.9 L1379.7 739.3 L1388.5 741.3 L1388.5 749.3 L1396.3 752.3 L1400.3 754.3 L1395.4 756.7 L1389.5 754.3 L1383.6 749.3 L1380.7 745.3 L1371.9 742.3 L1366.0 739.3 L1360.5 739.3 L1345.4 731.0 L1345.0 725.3 L1337.6 716.7 L1331.3 706.6 Z" fill="#e0e7cf"/><path d="M1322.7 703.6 L1327.2 703.6 L1327.4 705.9 L1328.0 713.8 L1332.7 721.1 L1337.6 724.7 L1336.0 722.6 L1332.7 718.2 L1326.8 712.7 L1323.9 707.1 Z" fill="#e0e7cf"/><path d="M1385.6 727.0 L1393.4 724.5 L1401.2 726.8 L1406.7 730.6 L1400.3 731.2 L1394.4 727.5 Z" fill="#e0e7cf"/><path d="M1406.3 731.6 L1418.1 733.9 L1413.0 736.0 L1406.3 734.5 Z" fill="#e0e7cf"/><path d="M1540.3 651.4 L1539.9 643.2 L1537.3 640.8 L1532.4 644.9 L1531.8 652.0 L1536.3 653.0 Z" fill="#e0e7cf"/><path d="M1648.5 794.7 L1650.9 801.7 L1648.9 805.8 L1644.0 821.2 L1640.1 822.2 L1637.4 815.2 L1638.7 811.0 L1638.2 804.8 L1643.0 801.7 Z" fill="#e0e7cf"/><path d="M1571.6 518.2 L1587.2 531.6 L1601.0 527.3 L1591.2 497.7 Z" fill="#e0e7cf"/><path d="M1653.8 567.4 L1661.6 572.2 L1665.6 557.7 L1659.7 543.5 Z" fill="#e0e7cf"/><path d="M1830.0 669.3 L1833.0 667.9 L1831.6 644.9 L1830.0 651.4 Z" fill="#e0e7cf"/><path d="M1505.0 599.6 L1508.9 595.3 L1522.6 594.8 L1525.6 602.0 L1516.8 609.2 L1507.9 607.4 Z" fill="#e0e7cf"/><path d="M1738.6 760.0 L1742.9 760.8 L1748.8 767.1 L1755.6 773.0 L1759.5 776.9 L1759.2 782.4 L1756.6 782.4 L1751.7 778.8 L1748.4 773.0 L1744.9 767.7 Z" fill="#e0e7cf"/><path d="M1758.0 784.3 L1764.4 783.8 L1772.3 784.5 L1776.2 786.3 L1767.4 787.1 L1759.5 785.7 Z" fill="#e0e7cf"/><path d="M1766.6 767.1 L1773.3 764.7 L1778.1 760.8 L1782.1 757.3 L1785.0 760.8 L1783.0 769.0 L1780.1 775.9 L1778.7 778.8 L1776.2 777.9 L1768.4 776.9 L1766.4 772.0 Z" fill="#e0e7cf"/><path d="M1786.0 769.6 L1795.8 769.0 L1788.9 773.0 L1792.8 779.8 L1788.9 780.8 L1787.5 774.9 Z" fill="#e0e7cf"/><path d="M1808.5 773.9 L1816.3 777.9 L1822.2 774.3 L1828.1 776.1 L1837.5 779.8 L1840.8 783.8 L1845.7 791.7 L1839.8 790.7 L1833.0 788.7 L1828.1 789.1 L1822.2 787.3 L1821.8 780.8 L1814.4 778.8 L1810.5 776.9 Z" fill="#e0e7cf"/><path d="M1787.0 734.1 L1791.5 734.1 L1790.9 739.3 L1794.8 745.3 L1788.9 743.7 L1787.9 741.3 Z" fill="#e0e7cf"/><path d="M1790.9 757.3 L1799.7 756.3 L1798.7 759.6 L1796.8 759.2 L1792.8 756.3 Z" fill="#e0e7cf"/><path d="M1777.2 787.1 L1783.0 787.7 L1790.9 787.3 L1794.8 787.9 L1785.0 788.7 Z" fill="#e0e7cf"/><path d="M1845.7 780.8 L1849.6 779.8 L1847.7 782.8 Z" fill="#e0e7cf"/><path d="M1890.1 843.1 L1895.6 849.1 L1901.5 850.8 L1898.6 855.3 L1894.7 860.5 L1893.7 854.1 Z" fill="#e0e7cf"/><path d="M1890.1 857.9 L1893.3 860.5 L1886.8 868.5 L1882.9 874.4 L1878.0 872.7 L1880.9 867.1 Z" fill="#e0e7cf"/><path d="M1526.5 716.1 L1542.2 705.9 L1571.6 703.6 L1591.2 707.1 L1614.7 707.1 L1620.5 718.2 L1626.4 733.1 L1616.6 741.3 L1591.2 739.3 L1571.6 738.2 L1542.2 738.2 L1520.7 731.0 Z" fill="#f0efe6"/><path d="M1622.5 710.5 L1638.2 707.1 L1649.9 716.1 L1661.6 722.6 L1659.7 733.1 L1640.1 737.2 L1630.3 731.0 Z" fill="#efede3"/><path d="M1669.5 581.9 L1708.6 557.7 L1747.8 535.7 L1806.5 570.4 L1865.3 579.1 L1904.4 587.2 L1904.4 606.5 L1875.1 615.2 L1845.7 615.2 L1806.5 623.2 L1767.4 630.8 L1728.2 623.2 L1689.1 615.2 L1669.5 606.5 Z" fill="#e8e6cf"/><path d="M1541.0 695.3 L1548.1 693.4 L1552.0 688.4 L1558.5 680.2 L1560.8 676.5 L1566.7 675.4 L1571.6 674.9 L1576.1 681.0 L1582.9 690.4 L1584.3 686.7 L1588.2 685.1 L1583.3 681.5 L1578.4 675.9 L1576.1 671.6 L1578.8 670.2 L1581.4 673.5 L1590.2 681.0 L1590.6 686.4 L1594.1 692.9 L1597.0 694.1 L1599.0 690.4 L1596.6 684.1 L1602.9 683.3 L1603.9 685.1 L1604.9 691.7 L1607.8 693.6 L1611.7 694.6 L1618.6 694.1 L1622.5 694.1 L1622.1 698.9 L1619.6 705.9 L1615.6 706.6 L1610.7 706.2 L1601.0 705.3 L1591.2 708.2 L1590.2 705.9 L1582.3 705.9 L1573.5 701.8 L1572.0 693.4 L1567.7 692.9 L1557.9 693.4 L1550.0 696.6 L1541.2 695.6 Z" fill="#c4ddf5"/><path d="M1606.8 677.6 L1609.8 671.3 L1612.1 667.9 L1617.6 673.5 L1622.5 671.6 L1627.4 666.5 L1629.3 667.9 L1626.4 672.1 L1630.3 676.5 L1633.3 681.5 L1622.5 682.0 L1614.7 680.5 L1608.8 682.6 Z" fill="#c4ddf5"/><path d="M1644.0 673.5 L1647.9 667.9 L1652.8 666.5 L1655.8 670.7 L1651.9 673.5 L1654.8 681.5 L1657.7 685.4 L1657.3 692.2 L1649.9 691.7 L1647.6 689.2 L1648.9 684.1 L1645.0 677.6 Z" fill="#c4ddf5"/><path d="M1615.6 709.4 L1617.6 715.0 L1621.5 723.0 L1625.0 734.1 L1629.3 740.3 L1635.8 746.3 L1637.0 745.9 L1635.6 740.3 L1632.7 733.1 L1628.4 726.8 L1625.4 720.4 L1620.5 713.8 L1620.1 710.5 Z" fill="#c4ddf5"/><path d="M1646.0 709.4 L1650.5 709.4 L1658.7 716.7 L1662.6 715.6 L1662.2 718.2 L1658.7 721.9 L1653.8 722.6 L1651.5 719.3 L1649.9 717.2 L1647.0 713.4 Z" fill="#c4ddf5"/><path d="M1573.1 644.9 L1579.4 644.9 L1588.2 642.5 L1593.1 639.8 L1594.1 632.7 L1599.0 633.8 L1600.0 625.6 L1610.7 623.2 L1595.1 621.3 L1594.1 612.6 L1601.9 602.0 L1595.1 598.2 L1586.9 613.1 L1589.2 623.2 L1584.3 632.7 L1579.4 639.8 L1576.5 638.0 Z" fill="#c4ddf5"/><path d="M1409.1 513.4 L1422.8 535.7 L1438.4 539.7 L1444.3 564.2 L1448.2 584.6 L1453.1 606.5 L1458.0 619.3 L1465.8 624.0 L1469.8 615.2 L1473.7 601.0 L1487.4 587.2 L1508.9 574.6 L1508.9 557.7 L1515.8 527.3 L1512.8 485.8 L1434.5 465.3 Z" fill="#f9f9f7"/><path d="M1275.9 622.1 L1275.9 578.6 L1287.7 581.9 L1301.4 575.1 L1317.0 581.9 L1328.8 589.3 L1344.5 591.3 L1360.1 592.3 L1366.0 589.3 L1375.8 581.9 L1385.6 579.1 L1391.4 592.3 L1383.6 604.3 L1370.9 615.2 L1367.0 627.1 L1370.9 634.5 L1379.7 638.0 L1390.5 641.5 L1390.9 649.8 L1396.3 653.0 L1397.3 643.2 L1401.2 636.3 L1401.6 623.2 L1399.3 613.9 L1409.1 614.3 L1415.9 619.3 L1421.8 629.0 L1425.7 622.5 L1431.2 638.0 L1439.8 643.2 L1442.9 651.4 L1434.5 657.0 L1421.8 657.0 L1425.7 660.6 L1425.1 665.0 L1432.6 670.7 L1422.8 673.5 L1419.2 671.6 L1415.9 665.6 L1413.0 672.1 L1405.2 672.1 L1402.2 674.9 L1397.3 676.8 L1390.5 681.0 L1390.5 671.3 L1386.5 667.9 L1377.7 663.6 L1365.6 660.6 L1311.2 660.6 L1310.2 662.7 L1307.2 657.6 L1301.4 653.0 L1296.5 642.5 L1297.5 638.4 L1295.5 635.2 L1290.6 629.0 L1286.7 625.2 L1282.8 626.3 L1279.8 622.1 L1275.9 622.1 Z" fill="#f6e5af" stroke="#6a6a6a" stroke-width="0.8" stroke-linejoin="round"/><path d="M1435.9 664.7 L1448.8 665.0 L1447.2 659.1 L1443.3 653.0 L1439.4 655.5 Z" fill="#f6e5af" stroke="#6a6a6a" stroke-width="0.8" stroke-linejoin="round"/><path d="M1383.6 602.0 L1391.4 606.5 L1394.4 609.6 L1384.6 610.9 L1380.7 604.3 Z" fill="#f6e5af" stroke="#6a6a6a" stroke-width="0.8" stroke-linejoin="round"/><path d="M1306.3 656.4 L1310.2 662.4 L1300.8 655.5 Z" fill="#f6e5af" stroke="#6a6a6a" stroke-width="0.8" stroke-linejoin="round"/><path d="M1422.8 674.9 L1426.7 667.9 L1434.5 666.5 L1430.6 671.6 Z" fill="#f6e5af" stroke="#6a6a6a" stroke-width="0.8" stroke-linejoin="round"/><path d="M1309.3 549.3 L1315.7 547.3 L1323.6 549.8 L1328.5 556.1 L1321.1 560.6 L1316.7 567.4 L1313.2 570.9 L1307.9 565.5 L1309.8 556.6 Z" fill="#f6e5af" stroke="#6a6a6a" stroke-width="0.8" stroke-linejoin="round"/><path d="M1320.6 563.5 L1329.4 556.1 L1338.3 561.5 L1342.2 554.7 L1347.1 553.7 L1349.1 558.6 L1348.1 566.4 L1351.0 572.3 L1355.9 577.2 L1354.5 584.1 L1344.2 583.1 L1338.3 585.1 L1329.4 588.0 L1327.5 583.1 L1324.5 578.2 L1328.5 574.3 L1323.6 570.4 Z" fill="#f6e5af" stroke="#6a6a6a" stroke-width="0.8" stroke-linejoin="round"/><path d="M1353.0 559.6 L1358.9 552.7 L1362.8 551.2 L1364.8 559.6 L1361.8 567.4 L1358.9 569.4 L1354.0 563.5 Z" fill="#f6e5af" stroke="#6a6a6a" stroke-width="0.8" stroke-linejoin="round"/><path d="M1359.9 580.2 L1363.8 578.2 L1368.7 579.2 L1370.7 584.1 L1366.7 592.0 L1360.8 588.0 Z" fill="#f6e5af" stroke="#6a6a6a" stroke-width="0.8" stroke-linejoin="round"/><path d="M1366.7 551.7 L1374.6 550.7 L1376.5 552.7 L1373.6 561.5 L1370.7 566.4 L1373.6 578.2 L1381.5 584.1 L1385.4 590.0 L1384.4 592.0 L1367.7 592.9 L1364.8 586.1 L1364.8 569.4 Z" fill="#f6e5af" stroke="#6a6a6a" stroke-width="0.8" stroke-linejoin="round"/><path d="M1385.4 553.2 L1381.5 554.2 L1378.0 560.6 L1378.5 569.4 L1382.4 576.3 L1388.3 577.2 L1386.4 571.3 L1384.4 562.5 L1386.4 556.6 Z" fill="#f6e5af" stroke="#6a6a6a" stroke-width="0.8" stroke-linejoin="round"/><path d="M1391.3 554.2 L1402.1 554.7 L1406.0 562.5 L1417.8 574.3 L1422.7 581.2 L1431.5 592.0 L1433.5 595.9 L1430.5 600.8 L1423.7 596.9 L1421.7 599.8 L1427.6 607.7 L1427.6 615.5 L1422.7 614.5 L1415.8 609.6 L1407.9 605.7 L1401.1 603.7 L1402.1 599.8 L1408.9 596.9 L1410.9 590.0 L1406.0 582.1 L1398.1 578.2 L1393.2 574.3 L1389.3 566.4 L1388.3 559.6 Z" fill="#f6e5af" stroke="#6a6a6a" stroke-width="0.8" stroke-linejoin="round"/><path d="M1383.4 597.8 L1388.3 600.8 L1396.2 607.7 L1392.2 610.6 L1384.4 609.6 Z" fill="#f6e5af" stroke="#6a6a6a" stroke-width="0.8" stroke-linejoin="round"/><path d="M1402.1 589.0 L1405.0 587.0 L1406.0 591.0 L1403.0 592.9 Z" fill="#f6e5af" stroke="#6a6a6a" stroke-width="0.8" stroke-linejoin="round"/><path d="M1275.9 578.6 L1262.2 574.6 L1245.4 568.6 L1236.8 574.6 L1227.0 582.4 L1231.5 591.8 L1223.1 599.2 L1228.9 604.3 L1236.8 604.3 L1228.9 612.6 L1229.9 621.3 L1234.8 624.0 L1243.6 628.2 L1242.6 632.7 L1234.8 638.7 L1229.3 643.5 L1240.7 638.7 L1248.5 632.7 L1253.4 630.1 L1255.4 625.2 L1258.3 619.3 L1263.2 620.1 L1270.0 623.2 L1277.9 624.0 L1282.8 629.0 L1287.7 636.3 L1291.6 640.8 L1295.5 641.5 L1297.5 638.4 L1295.5 635.2 L1290.6 629.0 L1286.7 625.2 L1282.8 626.3 L1279.8 622.1 L1275.9 622.1 Z" fill="#7c5233" stroke="#6a6a6a" stroke-width="0.8" stroke-linejoin="round"/><path d="M1311.2 660.6 L1365.6 660.6 L1377.7 663.6 L1386.5 667.9 L1390.5 671.3 L1390.5 681.0 L1397.3 676.8 L1402.2 674.9 L1405.2 672.1 L1413.0 672.1 L1415.9 665.6 L1419.2 671.6 L1420.8 673.5 L1414.0 677.6 L1414.9 681.0 L1407.1 684.1 L1403.2 690.4 L1403.8 697.3 L1398.3 700.6 L1393.4 705.5 L1395.4 716.5 L1393.6 720.2 L1390.5 714.3 L1387.5 709.4 L1376.8 708.9 L1375.8 711.6 L1367.9 710.5 L1361.7 715.0 L1361.5 718.5 L1357.2 715.0 L1353.3 709.8 L1350.3 711.6 L1347.4 710.3 L1343.5 705.3 L1334.7 706.4 L1327.2 703.6 L1322.7 703.6 L1320.0 700.1 L1315.9 698.7 L1312.1 691.7 L1308.8 684.6 L1308.2 677.6 L1309.2 668.5 L1307.8 662.7 Z" fill="#7c5233" stroke="#6a6a6a" stroke-width="0.8" stroke-linejoin="round"/><polyline points="1229.3,643.5 1223.1,647.2 1215.2,650.4 1207.4,652.0 1200.5,652.6" fill="none" stroke="#6a6a6a" stroke-width="1.3"/><path d="M1246.6 729.3 L1248.5 732.5 L1248.9 731.8 Z" fill="#7c5233" stroke="#6a6a6a" stroke-width="0.8" stroke-linejoin="round"/><path d="M1242.0 727.7 L1243.4 728.3 L1242.6 728.5 Z" fill="#7c5233" stroke="#6a6a6a" stroke-width="0.8" stroke-linejoin="round"/><path d="M1239.1 726.4 L1240.1 726.8 L1239.5 727.0 Z" fill="#7c5233" stroke="#6a6a6a" stroke-width="0.8" stroke-linejoin="round"/><path d="M1451.0 762.8 L1454.1 767.5 L1457.0 773.0 L1464.9 775.9 L1475.6 777.9 L1483.5 781.8 L1483.5 788.7 L1478.6 795.7 L1475.6 806.2 L1472.1 815.2 L1466.8 817.3 L1457.0 823.8 L1456.4 829.5 L1447.4 841.2 L1444.3 836.1 L1439.2 833.1 L1442.9 827.0 L1445.1 822.9 L1438.4 819.4 L1439.4 811.0 L1438.0 803.4 L1433.5 798.1 L1424.1 792.5 L1415.9 792.7 L1410.0 789.7 L1407.1 785.7 L1409.5 779.2 L1414.9 779.2 L1415.9 773.0 L1414.9 768.6 L1420.8 768.6 L1422.2 769.6 L1427.9 766.7 L1425.1 763.2 L1432.6 762.2 L1434.3 760.8 L1441.4 767.1 L1445.3 766.5 Z" fill="#faf3cb" stroke="#6a6a6a" stroke-width="0.8" stroke-linejoin="round"/><path d="M1415.9 805.8 L1417.9 815.2 L1418.3 820.5 L1415.9 828.2 L1414.9 839.5 L1414.0 846.7 L1412.0 856.6 L1411.4 868.5 L1408.7 881.4 L1410.4 885.9 L1412.0 890.6 L1418.1 892.2 L1420.8 900.5 L1413.0 900.5 L1406.1 890.6 L1404.2 875.5 L1408.1 861.8 L1408.1 849.1 L1412.0 838.4 L1414.0 817.3 L1414.5 807.9 Z" fill="#f3d48a" stroke="#6a6a6a" stroke-width="0.8" stroke-linejoin="round"/><path d="M1417.9 815.2 L1423.8 815.2 L1429.6 815.8 L1432.6 819.0 L1438.8 822.0 L1445.1 822.9 L1446.9 825.7 L1442.9 827.0 L1439.2 833.1 L1438.0 839.5 L1437.5 842.6 L1440.4 847.9 L1439.2 852.1 L1430.6 854.1 L1429.6 859.2 L1424.7 861.8 L1425.7 864.4 L1419.8 874.1 L1422.8 878.4 L1416.9 885.9 L1418.1 892.2 L1412.0 890.6 L1410.4 885.9 L1408.7 881.4 L1411.4 868.5 L1412.0 856.6 L1414.0 846.7 L1414.9 839.5 L1415.9 828.2 L1418.3 820.5 Z" fill="#efbe68" stroke="#6a6a6a" stroke-width="0.8" stroke-linejoin="round"/><path d="M1540.8 657.6 L1554.7 653.9 L1555.3 649.1 L1552.4 646.5 L1548.9 639.8 L1548.1 634.5 L1548.5 632.3 L1545.1 631.9 L1545.9 628.6 L1542.2 628.6 L1540.6 631.2 L1539.7 635.9 L1541.0 640.1 L1542.2 642.2 L1546.1 642.2 L1545.0 647.2 L1541.8 652.3 L1545.1 653.6 Z" fill="#eaa54c" stroke="#6a6a6a" stroke-width="0.8" stroke-linejoin="round"/><path d="M1549.5 620.1 L1550.4 621.3 L1549.5 623.6 L1548.9 622.1 Z" fill="#eaa54c" stroke="#6a6a6a" stroke-width="0.8" stroke-linejoin="round"/><path d="M1545.3 626.3 L1547.1 626.0 L1546.5 627.9 L1545.3 627.5 Z" fill="#eaa54c" stroke="#6a6a6a" stroke-width="0.8" stroke-linejoin="round"/><path d="M1537.1 635.2 L1539.9 629.0 L1538.5 629.7 L1536.9 632.7 Z" fill="#eaa54c" stroke="#6a6a6a" stroke-width="0.8" stroke-linejoin="round"/><path d="M1541.2 642.9 L1540.1 640.8 L1537.9 641.2 L1536.1 643.2 L1537.9 644.5 L1540.3 644.9 Z" fill="#eaa54c" stroke="#6a6a6a" stroke-width="0.8" stroke-linejoin="round"/><path d="M1570.4 677.6 L1570.8 679.7 L1570.0 681.8 L1568.8 680.5 Z" fill="#faf1c6" stroke="#6a6a6a" stroke-width="0.8" stroke-linejoin="round"/><path d="M1787.4 725.1 L1790.7 720.4 L1788.9 720.0 L1787.0 723.6 Z" fill="#e0e7cf"/><path d="M1556.9 654.2 L1560.2 657.9 L1568.1 660.6 L1566.7 665.0 L1565.3 668.2 L1565.7 671.3 L1566.7 675.4 L1558.5 677.0 L1558.1 679.2 L1548.5 676.5 L1549.7 673.5 L1547.1 665.6 L1542.6 662.4 L1548.7 661.5 L1549.1 658.5 L1555.1 655.1 Z" fill="#faf1c6" stroke="#6a6a6a" stroke-width="0.8" stroke-linejoin="round"/><path d="M1556.9 654.2 L1560.8 651.4 L1561.4 647.5 L1565.7 646.5 L1565.7 650.7 L1563.7 655.1 L1564.1 659.1 L1560.2 657.9 Z" fill="#faf1c6" stroke="#6a6a6a" stroke-width="0.8" stroke-linejoin="round"/><path d="M1565.7 646.5 L1568.8 645.2 L1568.8 641.5 L1573.5 643.9 L1579.8 645.2 L1580.6 649.8 L1581.4 654.5 L1575.9 656.7 L1579.0 661.2 L1577.5 665.0 L1572.6 665.0 L1566.9 664.7 L1568.1 660.6 L1564.1 659.1 L1563.7 655.1 L1565.7 650.7 Z" fill="#faf1c6" stroke="#6a6a6a" stroke-width="0.8" stroke-linejoin="round"/><path d="M1563.7 668.8 L1566.9 664.7 L1570.6 664.7 L1572.6 667.6 L1569.6 669.9 L1565.7 669.9 Z" fill="#faf1c6" stroke="#6a6a6a" stroke-width="0.8" stroke-linejoin="round"/><path d="M1565.7 669.9 L1572.6 667.6 L1578.8 667.9 L1578.8 670.2 L1576.1 671.6 L1578.4 675.9 L1583.3 681.5 L1588.2 685.1 L1584.3 686.7 L1582.9 690.4 L1576.1 681.0 L1571.6 674.9 L1566.7 675.4 L1565.7 671.3 Z" fill="#faf1c6" stroke="#6a6a6a" stroke-width="0.8" stroke-linejoin="round"/><path d="M1568.3 682.8 L1571.2 682.8 L1570.8 687.9 L1568.6 687.9 Z" fill="#faf1c6" stroke="#6a6a6a" stroke-width="0.8" stroke-linejoin="round"/><path d="M1576.3 690.2 L1582.5 689.7 L1581.6 693.6 Z" fill="#faf1c6" stroke="#6a6a6a" stroke-width="0.8" stroke-linejoin="round"/><path d="M1594.1 621.3 L1601.9 622.1 L1606.4 621.3 L1613.7 611.3 L1609.8 604.3 L1610.7 589.8 L1607.8 584.6 L1607.8 576.3 L1602.9 577.4 L1600.0 583.5 L1593.1 580.8 L1598.0 588.3 L1600.0 598.2 L1595.1 608.7 Z" fill="#f7ebbc" stroke="#6a6a6a" stroke-width="0.8" stroke-linejoin="round"/><path d="M1623.5 710.5 L1626.4 705.9 L1634.2 707.1 L1639.5 711.2 L1645.0 712.7 L1647.0 713.8 L1649.9 717.2 L1651.5 719.3 L1653.0 721.9 L1660.7 725.8 L1659.7 731.0 L1653.8 733.1 L1647.0 735.2 L1643.0 736.8 L1636.6 737.8 L1635.6 738.2 L1632.7 733.1 L1628.4 726.8 L1625.4 720.4 L1620.9 713.8 Z" fill="#f3d797" stroke="#6a6a6a" stroke-width="0.8" stroke-linejoin="round"/><path d="M1685.5 723.2 L1689.1 728.9 L1694.3 732.1 L1695.9 739.3 L1698.5 745.7 L1701.8 753.9 L1703.7 755.3 L1705.1 753.3 L1708.2 750.7 L1709.2 744.3 L1709.0 739.9 L1713.1 737.2 L1718.6 732.1 L1722.3 728.5 L1726.3 727.2 L1725.3 717.2 L1732.1 716.5 L1739.0 713.4 L1741.9 715.0 L1737.0 721.5 L1735.1 725.8 L1732.5 723.6 L1731.2 721.5 L1727.8 719.3 L1724.7 715.0 L1716.5 712.7 L1709.6 712.1 L1706.7 705.9 L1705.7 702.5 L1707.7 696.6 L1704.3 696.6 L1696.9 698.9 L1695.9 703.6 L1697.9 707.1 L1691.0 714.3 L1689.1 717.2 L1691.0 721.5 Z" fill="#faf0c9" stroke="#6a6a6a" stroke-width="0.8" stroke-linejoin="round"/><path d="M1708.2 759.2 L1712.2 757.3 L1709.2 751.7 Z" fill="#faf0c9" stroke="#6a6a6a" stroke-width="0.8" stroke-linejoin="round"/><path d="M1695.9 686.7 L1698.8 691.7 L1698.5 694.1 L1704.3 696.6 L1707.7 696.6 L1705.7 702.5 L1706.7 705.9 L1709.6 708.2 L1716.5 712.7 L1724.7 715.0 L1727.8 713.8 L1732.1 715.0 L1739.0 713.4 L1741.9 715.0 L1744.9 720.4 L1743.3 723.0 L1746.8 726.8 L1750.7 728.3 L1753.7 725.8 L1759.5 725.1 L1762.5 727.9 L1767.4 727.9 L1770.3 727.7 L1775.2 726.2 L1780.1 724.9 L1784.0 721.5 L1787.0 717.2 L1790.3 712.7 L1790.7 707.6 L1787.9 703.4 L1785.4 698.5 L1787.5 694.9 L1791.9 692.9 L1788.9 691.2 L1784.8 691.7 L1783.0 689.2 L1782.3 687.9 L1786.0 686.2 L1789.9 683.3 L1791.5 684.4 L1789.3 688.2 L1795.4 685.4 L1798.7 682.8 L1802.6 680.2 L1807.7 678.9 L1808.5 672.7 L1812.4 672.1 L1815.4 662.7 L1808.5 664.4 L1801.6 658.2 L1797.7 648.2 L1788.9 647.2 L1787.0 653.0 L1780.7 658.2 L1782.7 664.2 L1786.0 666.5 L1778.1 670.7 L1770.3 676.2 L1760.5 679.4 L1749.8 678.9 L1740.8 678.4 L1738.6 674.0 L1729.8 667.9 L1723.9 660.0 L1719.4 666.2 L1713.5 671.3 L1709.0 672.1 L1709.6 678.1 L1701.8 684.1 Z" fill="#f1c571" stroke="#6a6a6a" stroke-width="0.8" stroke-linejoin="round"/><path d="M1764.6 732.7 L1768.4 730.8 L1769.3 731.8 L1766.4 734.7 Z" fill="#f1c571" stroke="#6a6a6a" stroke-width="0.8" stroke-linejoin="round"/><path d="M1808.3 700.1 L1811.4 696.6 L1818.3 695.6 L1820.6 692.9 L1826.1 686.7 L1826.1 681.5 L1829.1 682.3 L1830.0 686.7 L1827.1 695.3 L1825.7 697.8 L1823.2 698.5 L1819.9 698.9 L1816.3 701.1 L1812.4 699.7 Z" fill="#f9edbf" stroke="#6a6a6a" stroke-width="0.8" stroke-linejoin="round"/><path d="M1806.0 702.0 L1810.1 700.6 L1809.5 706.4 L1806.9 706.6 Z" fill="#f9edbf" stroke="#6a6a6a" stroke-width="0.8" stroke-linejoin="round"/><path d="M1826.1 681.5 L1829.1 671.0 L1836.9 676.8 L1832.6 680.2 L1827.1 678.9 Z" fill="#f9edbf" stroke="#6a6a6a" stroke-width="0.8" stroke-linejoin="round"/><path d="M1811.4 702.5 L1815.7 700.1 L1814.8 701.8 L1812.4 702.9 Z" fill="#f9edbf" stroke="#6a6a6a" stroke-width="0.8" stroke-linejoin="round"/><path d="M1774.2 815.2 L1775.2 824.8 L1777.2 832.6 L1777.2 841.9 L1783.0 844.2 L1793.8 841.6 L1798.7 837.9 L1808.5 836.1 L1814.4 839.1 L1817.9 843.8 L1821.8 840.7 L1821.2 845.4 L1823.2 845.7 L1826.1 851.3 L1834.0 852.3 L1838.8 854.1 L1845.7 850.3 L1851.6 834.9 L1852.6 828.2 L1851.6 821.6 L1846.7 816.2 L1841.8 809.9 L1837.9 807.5 L1836.5 800.7 L1833.0 798.7 L1831.0 792.1 L1829.1 797.7 L1829.1 804.8 L1826.1 806.2 L1818.3 801.7 L1819.9 795.3 L1811.4 793.7 L1806.5 796.7 L1804.6 800.7 L1800.7 798.7 L1796.8 799.7 L1791.9 804.8 L1788.9 809.9 L1781.1 812.4 Z" fill="#f1c670" stroke="#6a6a6a" stroke-width="0.8" stroke-linejoin="round"/><path d="M1835.1 858.7 L1842.4 858.9 L1840.8 865.0 L1837.9 865.8 Z" fill="#f1c670" stroke="#6a6a6a" stroke-width="0.8" stroke-linejoin="round"/><path d="M1575.1 805.4 L1578.4 804.8 L1588.2 805.6 L1593.1 806.8 L1597.6 805.8 L1601.0 806.4 L1593.1 807.3 L1591.2 815.2 L1591.2 821.2 L1591.2 829.0 L1587.2 829.9 L1584.3 829.5 L1581.8 825.9 L1580.4 816.2 Z" fill="#faf2c8" stroke="#6a6a6a" stroke-width="0.8" stroke-linejoin="round"/><path d="M1591.2 815.2 L1593.1 807.3 L1597.6 806.2 L1601.5 806.4 L1603.9 809.9 L1608.8 815.0 L1606.8 816.7 L1603.9 820.9 L1601.9 822.7 L1597.0 822.2 L1591.2 821.2 Z" fill="#faf2c8" stroke="#6a6a6a" stroke-width="0.8" stroke-linejoin="round"/><path d="M1601.5 806.4 L1604.9 805.2 L1608.4 802.7 L1612.7 802.3 L1616.2 804.2 L1616.6 810.6 L1615.0 814.1 L1613.3 816.0 L1609.6 815.6 L1608.8 815.0 L1603.9 809.9 Z" fill="#faf2c8" stroke="#6a6a6a" stroke-width="0.8" stroke-linejoin="round"/><path d="M1584.3 829.5 L1588.0 841.9 L1591.2 843.8 L1596.1 841.6 L1601.9 841.9 L1606.8 839.1 L1612.3 831.5 L1615.6 829.3 L1616.4 825.5 L1614.5 823.5 L1613.3 816.0 L1609.6 815.6 L1606.8 816.7 L1603.9 820.9 L1601.9 822.7 L1597.0 822.2 L1591.2 821.2 L1591.2 829.0 L1587.2 829.9 Z" fill="#b56a32" stroke="#6a6a6a" stroke-width="0.8" stroke-linejoin="round"/><path d="M1604.9 832.0 L1607.8 829.5 L1609.6 831.5 L1606.8 834.0 Z" fill="#f4f0dc" stroke="#6a6a6a" stroke-width="0.6" stroke-linejoin="round"/><circle cx="1390" cy="679.5" r="3.6" fill="#4a77ab" stroke="#7a8a9a" stroke-width="0.5"/><circle cx="1398.8" cy="677.8" r="3.6" fill="#4a77ab" stroke="#7a8a9a" stroke-width="0.5"/><circle cx="1408.7" cy="684" r="3.6" fill="#4a77ab" stroke="#7a8a9a" stroke-width="0.5"/><circle cx="1403.2" cy="688.9" r="3.6" fill="#4a77ab" stroke="#7a8a9a" stroke-width="0.5"/><circle cx="1328.5" cy="695.3" r="3.6" fill="#4a77ab" stroke="#7a8a9a" stroke-width="0.5"/><circle cx="1394.3" cy="713.6" r="3.6" fill="#4a77ab" stroke="#7a8a9a" stroke-width="0.5"/><circle cx="1550.7" cy="645.6" r="3.6" fill="#c9c9c9" stroke="#7a8a9a" stroke-width="0.5"/><circle cx="1552.4" cy="654.4" r="3.6" fill="#4a77ab" stroke="#7a8a9a" stroke-width="0.5"/><circle cx="1557.1" cy="662" r="3.6" fill="#4a77ab" stroke="#7a8a9a" stroke-width="0.5"/><circle cx="1589.2" cy="841.3" r="3.6" fill="#4a77ab" stroke="#7a8a9a" stroke-width="0.5"/></svg>
<div class="a" style="left:1717px;top:916.5px;font-size:13px;color:#3a3a3a;line-height:15px;text-shadow:0 0 2px #fff,0 0 1px #fff">&#169; <span style="text-decoration:underline">OpenStreetMap contributors</span></div>
</body></html>
